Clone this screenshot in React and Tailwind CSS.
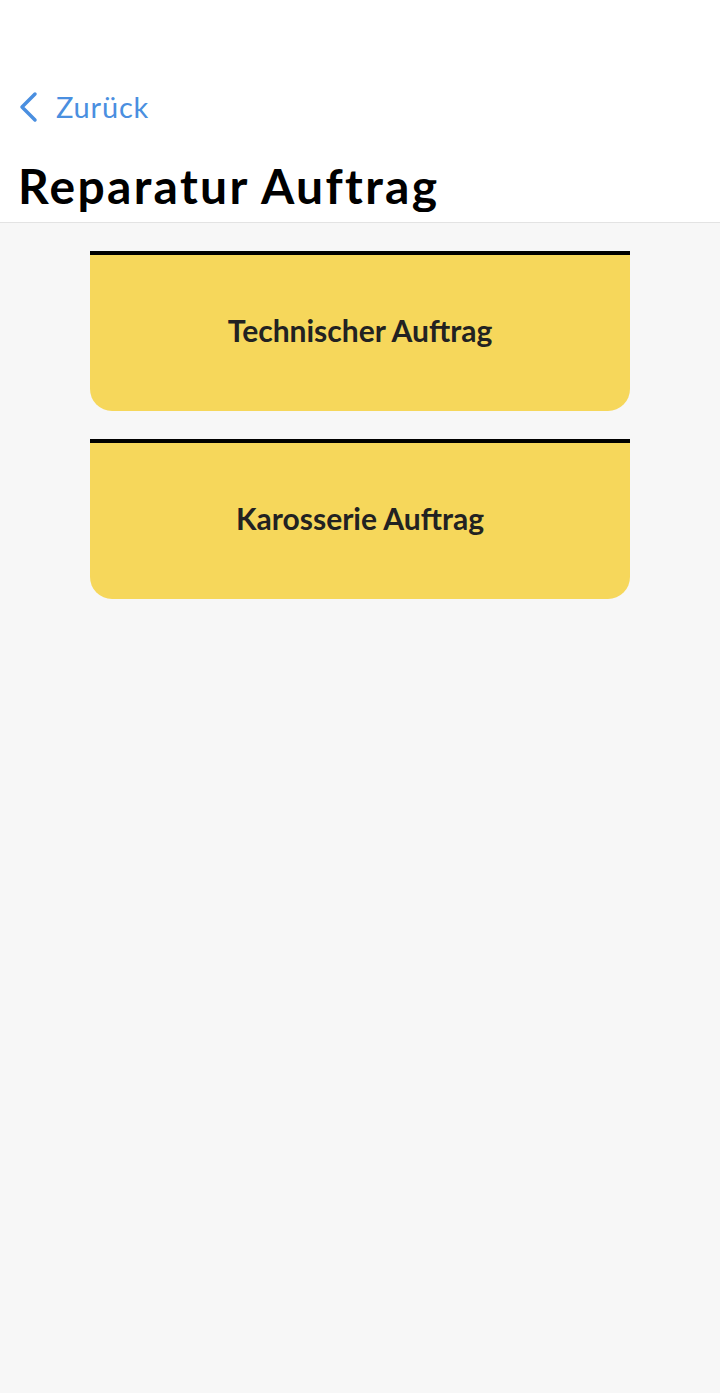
import React from 'react';

const Card = ({ label }) => (
    <button className="w-[540px] h-[160px] bg-[#f6d75b] border-t-4 border-black rounded-b-[22px] flex items-center justify-center pb-[5px]">
        <span className="text-[30px] font-bold text-[#222222]">{label}</span>
    </button>
);

const App = () => {
    return (
        <div className="min-h-[1393px] bg-[#f7f7f7] font-['Lato',sans-serif]">
            <div className="bg-white border-b border-[#e3e3e3] pb-[10px]">
                <div className="h-[212px] overflow-hidden">
                    <div className="h-[72px]"></div>
                    <div className="flex items-center h-[70px] pl-[18px]">
                        <svg width="22" height="32" viewBox="0 0 22 32" className="mr-[16px]">
                            <path d="M17 3 L4 16 L17 29" fill="none" stroke="#4a8fe0" strokeWidth="3.5" strokeLinecap="round" strokeLinejoin="round" />
                        </svg>
                        <span className="text-[29px] tracking-[0.8px] text-[#4a8fe0]">Zurück</span>
                    </div>
                    <h1 className="pl-[18px] pt-[20px] text-[48px] leading-[48px] tracking-[2.3px] font-bold text-black">Reparatur Auftrag</h1>
                </div>
            </div>
            <div className="flex flex-col items-center gap-[28px] pt-[28px]">
                <Card label="Technischer Auftrag" />
                <Card label="Karosserie Auftrag" />
            </div>
        </div>
    );
};

export default App;
